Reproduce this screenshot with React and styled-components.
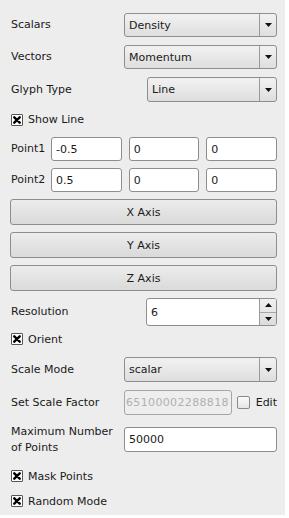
import React from "react";
import styled, { createGlobalStyle } from "styled-components";

const Global = createGlobalStyle`
  html, body {
    margin: 0;
    padding: 0;
    background: #ffffff;
  }
  * {
    box-sizing: border-box;
  }
`;

const Panel = styled.div`
  width: 285px;
  height: 515px;
  background: #ededed;
  padding: 13px 8px 0 10px;
  display: flex;
  flex-direction: column;
  gap: 8px;
  font-family: "DejaVu Sans", "Liberation Sans", sans-serif;
  font-size: 11px;
  color: #1a1a1a;
`;

const Row = styled.div`
  display: flex;
  align-items: center;
  height: ${(p) => p.h || 24}px;
  margin-top: ${(p) => p.mt || 0}px;
`;

const Label = styled.div`
  flex: 0 0 ${(p) => p.w || 114}px;
  padding-left: 1px;
  line-height: ${(p) => p.lh || 14}px;
  white-space: nowrap;
`;

const ComboBox = styled.div`
  flex: 1;
  height: 100%;
  display: flex;
  border: 1px solid #8e8e8e;
  border-radius: 3px;
  background: linear-gradient(#f2f2f2, #dedede);
`;

const ComboText = styled.div`
  flex: 1;
  display: flex;
  align-items: center;
  padding-left: 4px;
`;

const ArrowZone = styled.div`
  flex: 0 0 17px;
  display: flex;
  align-items: center;
  justify-content: center;
  border-left: 1px solid #9a9a9a;
`;

const Arrow = ({ up }) => (
  <svg width="7" height="4" viewBox="0 0 7 4">
    <polygon points={up ? "0,4 7,4 3.5,0" : "0,0 7,0 3.5,4"} fill="#111" />
  </svg>
);

const Combo = ({ value }) => (
  <ComboBox>
    <ComboText>{value}</ComboText>
    <ArrowZone>
      <Arrow />
    </ArrowZone>
  </ComboBox>
);

const Inputs = styled.div`
  flex: 1;
  height: ${(p) => p.h || 24}px;
  display: flex;
  gap: 7px;
`;

const Field = styled.div`
  flex: 1;
  height: 100%;
  display: flex;
  align-items: center;
  padding-left: ${(p) => (p.disabled ? 1 : 4)}px;
  background: ${(p) => (p.disabled ? "#eeeeee" : "#ffffff")};
  border: 1px solid ${(p) => (p.disabled ? "#a6a6a6" : "#8e8e8e")};
  border-radius: 3px;
  color: ${(p) => (p.disabled ? "#b0b0b0" : "#1a1a1a")};
  overflow: hidden;
  white-space: nowrap;
  letter-spacing: ${(p) => (p.disabled ? "0.35px" : "0")};
`;

const Button = styled.div`
  flex: 1;
  height: 100%;
  display: flex;
  align-items: center;
  justify-content: center;
  border: 1px solid #8e8e8e;
  border-radius: 3px;
  background: linear-gradient(#ececec, #dadada);
`;

const Spin = styled.div`
  flex: 1;
  height: 100%;
  display: flex;
  border: 1px solid #8e8e8e;
  border-radius: 3px;
  background: #ffffff;
  overflow: hidden;
`;

const SpinText = styled.div`
  flex: 1;
  display: flex;
  align-items: center;
  padding-left: 4px;
`;

const SpinButtons = styled.div`
  flex: 0 0 17px;
  display: flex;
  flex-direction: column;
  border-left: 1px solid #9a9a9a;
  background: linear-gradient(#f0f0f0, #dcdcdc);
`;

const SpinHalf = styled.div`
  flex: 1;
  display: flex;
  align-items: center;
  justify-content: center;
  border-top: ${(p) => (p.lower ? "1px solid #a6a6a6" : "none")};
`;

const CheckRow = styled.div`
  display: flex;
  align-items: center;
  gap: 5px;
  height: ${(p) => p.h || 14}px;
  margin-top: ${(p) => p.mt || 0}px;
  padding-left: 1px;
`;

const Box = styled.div`
  width: ${(p) => (p.checked ? 12 : 13)}px;
  height: ${(p) => (p.checked ? 12 : 13)}px;
  flex: 0 0 auto;
  border: 1px solid ${(p) => (p.checked ? "#555555" : "#8a8a8a")};
  border-radius: ${(p) => (p.checked ? 1 : 2)}px;
  background: ${(p) => (p.checked ? "#ffffff" : "linear-gradient(#fafafa, #e6e6e6)")};
  display: flex;
  align-items: center;
  justify-content: center;
`;

const Check = ({ checked }) => (
  <Box checked={checked}>
    {checked && (
      <svg width="8" height="8" viewBox="0 0 8 8">
        <path
          d="M1.3 1.3 L6.7 6.7 M6.7 1.3 L1.3 6.7"
          stroke="#000"
          strokeWidth="2.4"
          strokeLinecap="round"
        />
      </svg>
    )}
  </Box>
);

const EditBox = styled.div`
  flex: 0 0 auto;
  display: flex;
  align-items: center;
  gap: 6px;
  margin-left: 5px;
`;

export default function App() {
  return (
    <>
      <Global />
      <Panel>
        <Row>
          <Label>Scalars</Label>
          <Combo value="Density" />
        </Row>
        <Row>
          <Label>Vectors</Label>
          <Combo value="Momentum" />
        </Row>
        <Row h={25}>
          <Label w={137}>Glyph Type</Label>
          <Combo value="Line" />
        </Row>
        <CheckRow h={19}>
          <Check checked />
          <span>Show Line</span>
        </CheckRow>
        <Row>
          <Label w={41}>Point1</Label>
          <Inputs>
            <Field>-0.5</Field>
            <Field>0</Field>
            <Field>0</Field>
          </Inputs>
        </Row>
        <Row mt={-1}>
          <Label w={41}>Point2</Label>
          <Inputs>
            <Field>0.5</Field>
            <Field>0</Field>
            <Field>0</Field>
          </Inputs>
        </Row>
        <Row h={26} mt={-1}>
          <Button>X Axis</Button>
        </Row>
        <Row h={26} mt={-1}>
          <Button>Y Axis</Button>
        </Row>
        <Row h={26} mt={-1}>
          <Button>Z Axis</Button>
        </Row>
        <Row h={28} mt={-1}>
          <Label w={136}>Resolution</Label>
          <Spin>
            <SpinText>6</SpinText>
            <SpinButtons>
              <SpinHalf>
                <Arrow up />
              </SpinHalf>
              <SpinHalf lower>
                <Arrow />
              </SpinHalf>
            </SpinButtons>
          </Spin>
        </Row>
        <CheckRow mt={-2}>
          <Check checked />
          <span>Orient</span>
        </CheckRow>
        <Row h={25} mt={3}>
          <Label>Scale Mode</Label>
          <Combo value="scalar" />
        </Row>
        <Row h={25}>
          <Label>Set Scale Factor</Label>
          <Field disabled>65100002288818</Field>
          <EditBox>
            <Check />
            <span>Edit</span>
          </EditBox>
        </Row>
        <Row h={33}>
          <Label lh={16}>
            Maximum Number
            <br />
            of Points
          </Label>
          <Inputs h={25}>
            <Field>50000</Field>
          </Inputs>
        </Row>
        <CheckRow mt={5}>
          <Check checked />
          <span>Mask Points</span>
        </CheckRow>
        <CheckRow mt={3}>
          <Check checked />
          <span>Random Mode</span>
        </CheckRow>
      </Panel>
    </>
  );
}
